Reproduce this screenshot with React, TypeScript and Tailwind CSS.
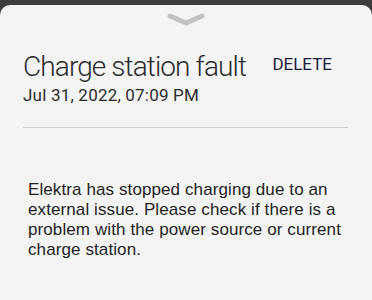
export default function App() {
  return (
    <div className="w-[372px] h-[300px] bg-[#3d3d3d] pt-[5px] overflow-hidden">
      <div className="h-full bg-[#f4f4f4] rounded-t-[10px] px-[23px] pr-[24px]">
        {/* Handle */}
        <div className="flex justify-center pt-[8px]">
          <svg width="38" height="14" viewBox="0 0 38 14" fill="none">
            <path d="M3 3 L19 10 L35 3" stroke="#c2c2c2" strokeWidth="5" strokeLinecap="round" strokeLinejoin="round" />
          </svg>
        </div>

        {/* Header */}
        <div className="flex items-start justify-between mt-[24px]">
          <div className="flex flex-col">
            <h1
              className="text-[28px] leading-[32px] font-light text-[#2b2b2b] tracking-[-0.9px]"
              style={{ fontFamily: "Roboto, sans-serif" }}
            >
              Charge station fault
            </h1>
            <p
              className="text-[17px] leading-[20px] text-[#2b2b2b] mt-[2px] tracking-[0.2px]"
              style={{ fontFamily: "Roboto, sans-serif" }}
            >
              Jul 31, 2022, 07:09 PM
            </p>
          </div>
          <button
            className="text-[17px] leading-[20px] text-[#1b1b3d] mt-[3px] mr-[16px]"
            style={{ fontFamily: "Roboto, sans-serif" }}
          >
            DELETE
          </button>
        </div>

        <div className="border-t border-[#d0d0d0] mt-[22px]" />

        <p
          className="text-[17px] leading-[20px] text-[#1f1f1f] mt-[52px] pl-[5px] tracking-[0.1px]"
          style={{ fontFamily: "'Liberation Sans', Arial, sans-serif" }}
        >
          Elektra has stopped charging due to an external issue. Please check if there is a problem with the power source or current charge station.
        </p>
      </div>
    </div>
  );
}
